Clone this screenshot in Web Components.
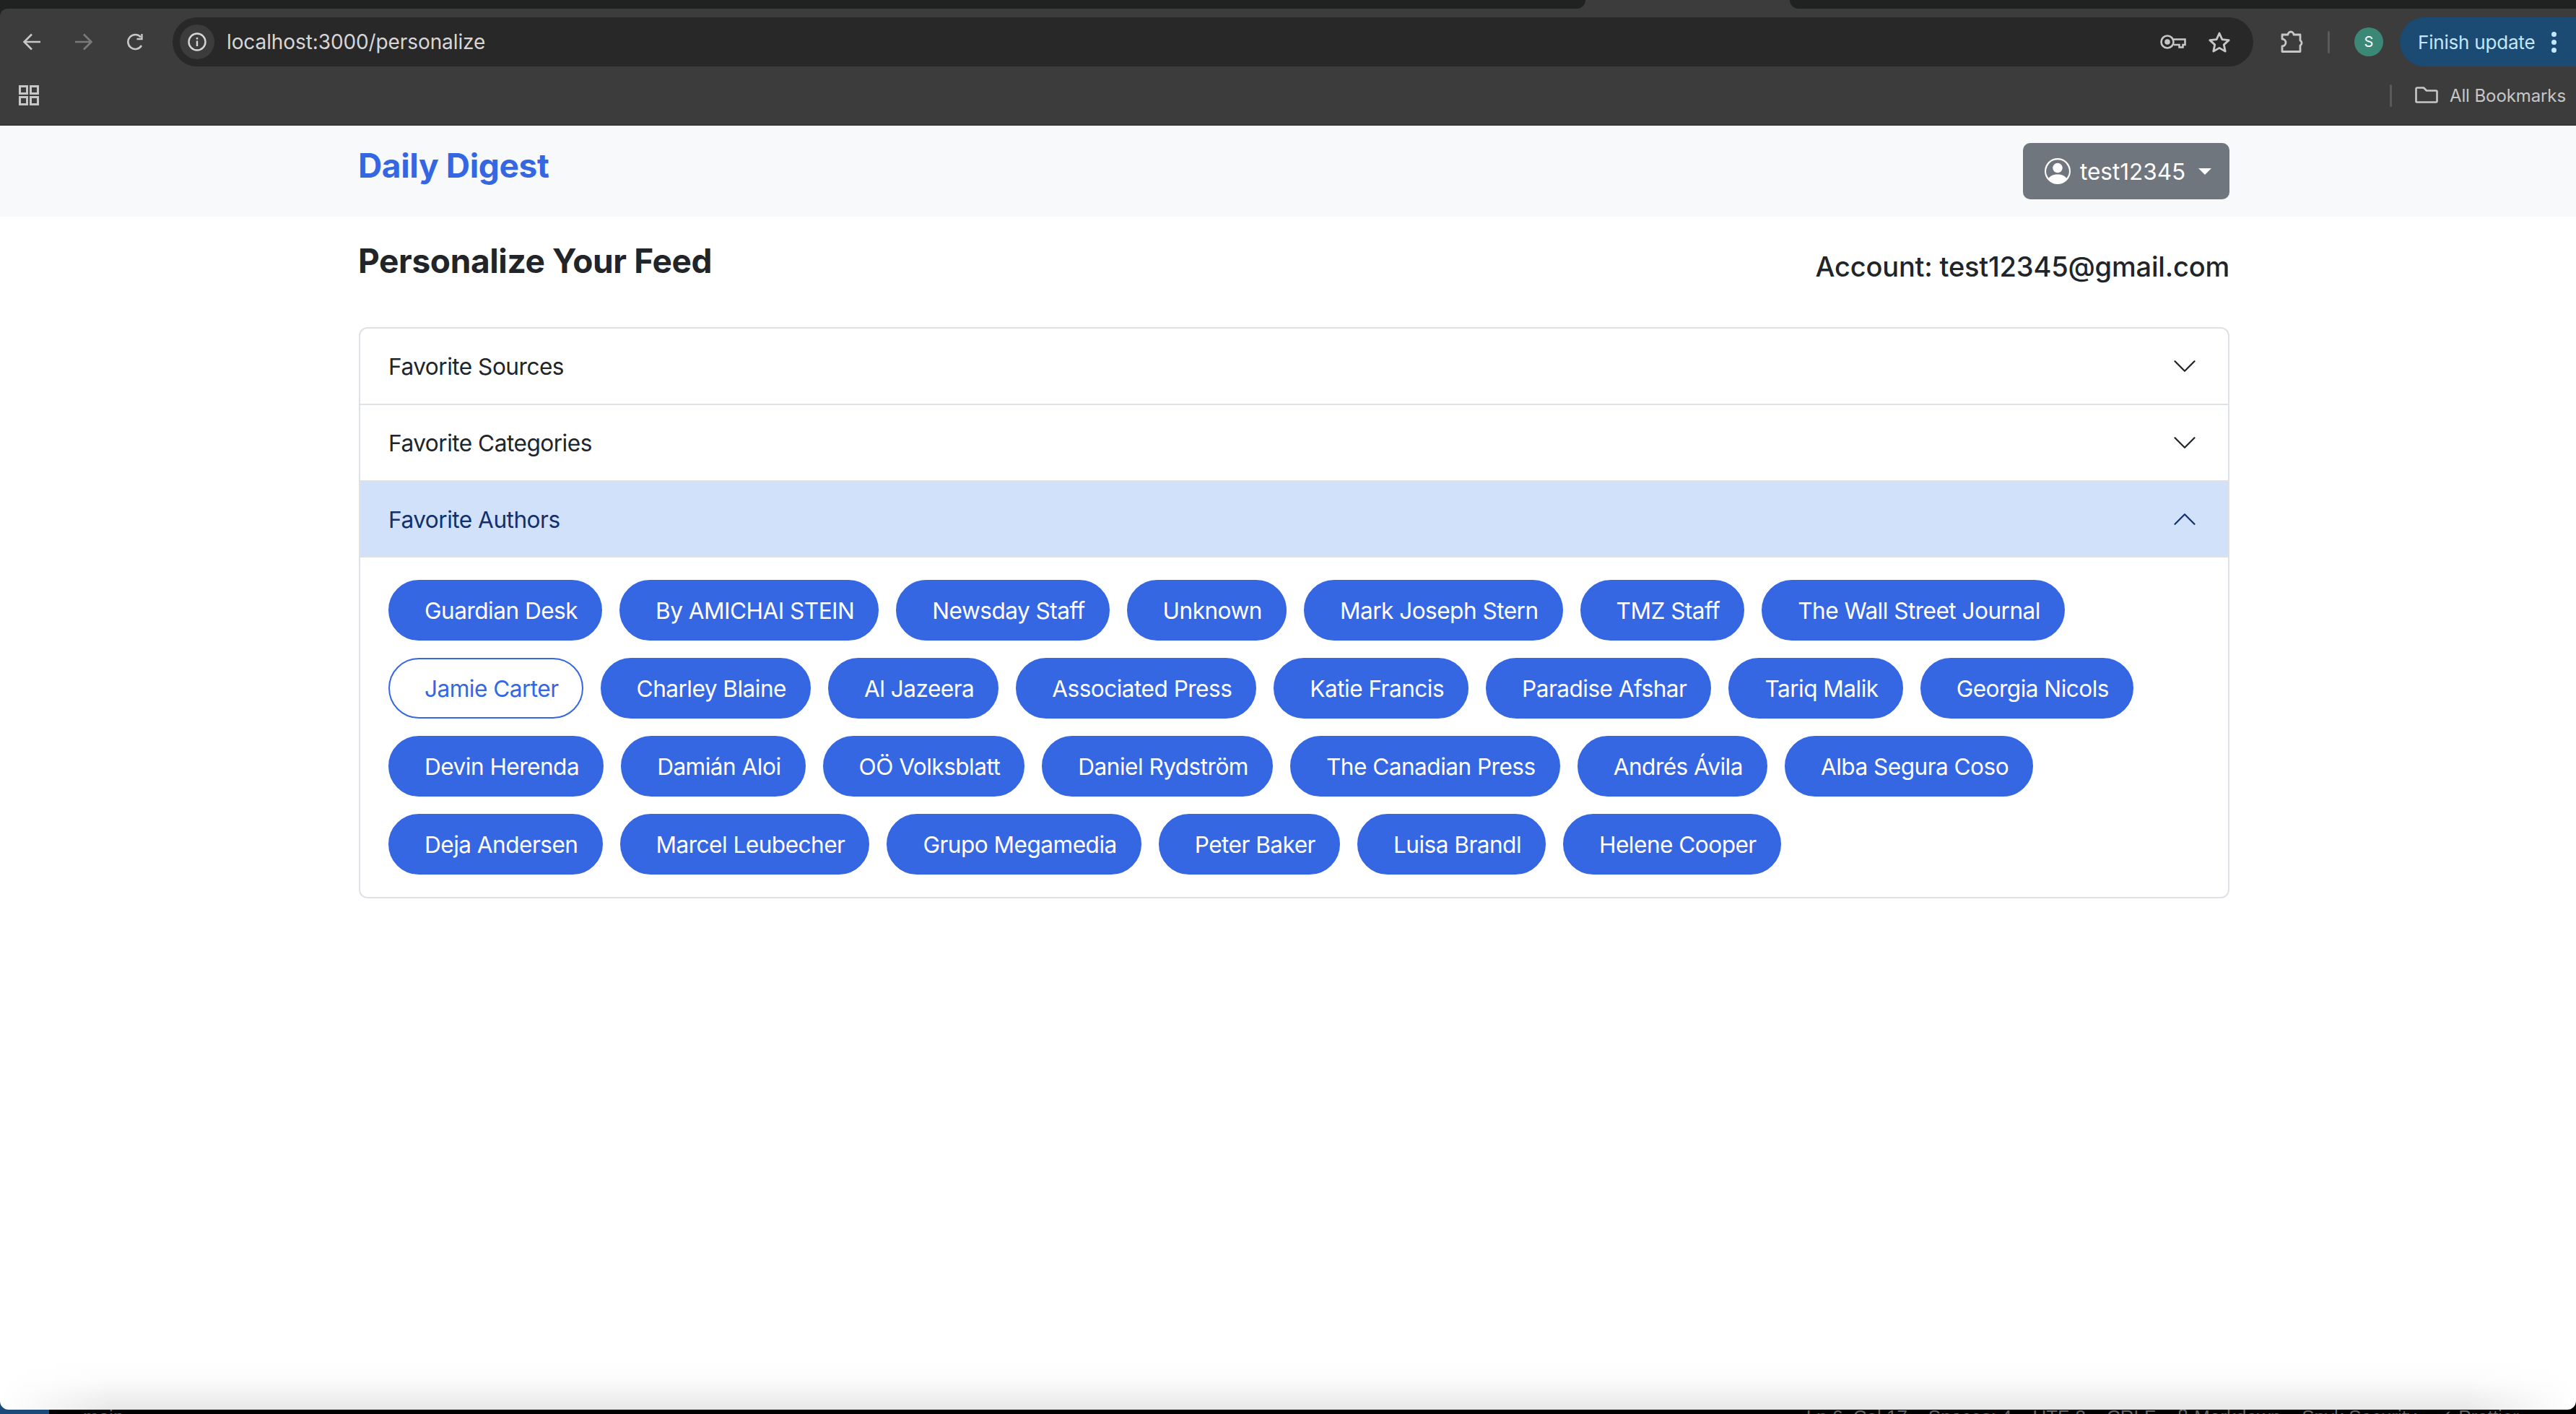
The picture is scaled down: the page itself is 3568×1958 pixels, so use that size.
<!DOCTYPE html>
<html lang="en">
<head>
<meta charset="utf-8">
<title>Daily Digest</title>
<style>
  html, body { margin: 0; height: 100%; background: #000; }
  body { font-family: Inter, "Liberation Sans", sans-serif; }
</style>
</head>
<body>
<browser-frame>
  <digest-nav slot="page" brand="Daily Digest" user="test12345"></digest-nav>
  <feed-settings slot="page" account="test12345@gmail.com"></feed-settings>
</browser-frame>

<script>
const ICONS = {
  chevron: '<path d="M1.646 4.646a.5.5 0 0 1 .708 0L8 10.293l5.646-5.647a.5.5 0 0 1 .708.708l-6 6a.5.5 0 0 1-.708 0l-6-6a.5.5 0 0 1 0-.708z"/>',
  person: '<path d="M11 6a3 3 0 1 1-6 0 3 3 0 0 1 6 0z"/><path fill-rule="evenodd" d="M0 8a8 8 0 1 1 16 0A8 8 0 0 1 0 8zm8-7a7 7 0 0 0-5.468 11.37C3.242 11.226 4.805 10 8 10s4.757 1.225 5.468 2.37A7 7 0 0 0 8 1z"/>',
}

const AUTHORS = [
  'Guardian Desk', 'By AMICHAI STEIN', 'Newsday Staff', 'Unknown', 'Mark Joseph Stern', 'TMZ Staff',
  'The Wall Street Journal', 'Jamie Carter', 'Charley Blaine', 'Al Jazeera', 'Associated Press',
  'Katie Francis', 'Paradise Afshar', 'Tariq Malik', 'Georgia Nicols', 'Devin Herenda', 'Damián Aloi',
  'OÖ Volksblatt', 'Daniel Rydström', 'The Canadian Press', 'Andrés Ávila', 'Alba Segura Coso',
  'Deja Andersen', 'Marcel Leubecher', 'Grupo Megamedia', 'Peter Baker', 'Luisa Brandl', 'Helene Cooper',
]
// the only author in the list that is switched off
const UNSELECTED = new Set(['Jamie Carter'])

class BrowserFrame extends HTMLElement {
  constructor() {
    super()
    this.attachShadow({ mode: 'open' })
    this.shadowRoot.innerHTML = `
      <style>
        :host {
          display: flex; flex-direction: column; height: 1958px; overflow: hidden;
          background: linear-gradient(to right, #1b4a7a 68px, #000 68px) bottom / 100% 30px no-repeat, #202222;
        }
        .titlebar { height: 12px; background: #3c3c3c; flex: none; display: flex; }
        .strip { background: #202222; height: 12px; }
        .strip.a { width: 2196px; border-bottom-right-radius: 12px; }
        .strip.b { margin-left: 283px; flex: 1; border-bottom-left-radius: 12px; }
        .chrome {
          flex: none; height: 162px; box-sizing: border-box; background: #3c3c3c;
          border-top-left-radius: 10px; border-bottom: 2px solid #353535;
          color: #c7c7c7; font-family: Inter, "Liberation Sans", sans-serif;
        }
        .toolbar { display: flex; align-items: center; height: 68px; margin-top: 12px; }
        .nav { flex: none; width: 26px; height: 24px; margin-left: 46px; }
        .nav:first-child { margin-left: 31px; }
        .nav.off { opacity: .45; }
        .omni {
          flex: none; width: 2882px; height: 68px; margin-left: 38px; border-radius: 34px; background: #282828;
          display: flex; align-items: center; box-sizing: border-box; padding-left: 10px;
        }
        .chip { flex: none; width: 48px; height: 48px; border-radius: 50%; background: #3c3c3c; display: flex; align-items: center; justify-content: center; }
        .url { margin-left: 17px; font-size: 28px; color: #d6d6d6; letter-spacing: -.1px; flex: 1; }
        .omni svg.key { margin-right: 30px; }
        .omni svg.star { margin-right: 31px; }
        .sep { flex: none; width: 3px; background: #5a5a5a; border-radius: 2px; }
        .ext { margin-left: 38px; flex: none; }
        .avatar {
          flex: none; width: 40px; height: 40px; margin-left: 34px; border-radius: 50%;
          background: #3c8877; color: #fff; font-size: 20px; display: flex; align-items: center; justify-content: center;
        }
        .update {
          flex: none; width: 260px; height: 68px; margin-left: 23px; border-radius: 34px 0 0 34px; background: #1b4a73; color: #c2e7ff;
          display: flex; align-items: center; box-sizing: border-box; padding-left: 25px; font-size: 26px; letter-spacing: -.2px; white-space: nowrap;
        }
        .dots { display: flex; flex-direction: column; gap: 4px; margin-left: 23px; }
        .dots i { display: block; width: 7px; height: 7px; border-radius: 50%; background: #c2e7ff; }
        .bookmarks { display: flex; align-items: center; height: 56px; margin-top: 12px; padding-left: 26px; }
        .bookmarks .all { margin-left: auto; display: flex; align-items: center; font-size: 24px; letter-spacing: -.1px; padding-right: 14px; }
        .page { flex: 1; background: #fff; display: flex; flex-direction: column; min-height: 0; position: relative; border-radius: 0 0 12px 12px; overflow: hidden; }
        /* window shadow from whatever lies below the browser */
        .page::after {
          content: ''; position: absolute; left: 0; right: 0; bottom: 0; height: 70px; pointer-events: none;
          background: linear-gradient(to bottom, rgba(0,0,0,0), rgba(0,0,0,.012) 40%, rgba(0,0,0,.09));
          -webkit-mask-image: linear-gradient(to right, transparent 0, #000 150px, #000 calc(100% - 150px), transparent 100%);
        }
        .under {
          flex: none; height: 6px; overflow: hidden; color: #666; display: flex;
          font: 26px/26px "Liberation Sans", sans-serif; white-space: pre;
        }
        .under span { display: block; margin-top: -3px; }
        .under .left { margin-left: 115px; }
        .under .right { margin-left: auto; margin-right: 79px; }
      </style>
      <div class="titlebar"><div class="strip a"></div><div class="strip b"></div></div>
      <div class="chrome">
        <div class="toolbar">
          <svg class="nav" viewBox="0 0 26 24" fill="none" stroke="#c7c7c7" stroke-width="2.6"><path d="M25 12H3M13 1.5 2.5 12 13 22.5"/></svg>
          <svg class="nav off" viewBox="0 0 26 24" fill="none" stroke="#c7c7c7" stroke-width="2.6"><path d="M1 12h22M13 1.5 23.5 12 13 22.5"/></svg>
          <svg class="nav" viewBox="0 0 26 24" fill="none" stroke="#c7c7c7" stroke-width="2.6"><path d="M21 17a10 10 0 1 1-1-11.500"/><path d="M21.500 1v7h-7" stroke-width="2.400"/></svg>
          <div class="omni">
            <div class="chip">
              <svg width="26" height="26" viewBox="0 0 26 26" fill="none" stroke="#d6d6d6" stroke-width="2.400"><circle cx="13" cy="13" r="11.500"/><path d="M13 11.500v7.500M13 7v2.500"/></svg>
            </div>
            <div class="url">localhost:3000/personalize</div>
            <svg class="key" width="36" height="20" viewBox="0 0 36 20" fill="none" stroke="#c7c7c7" stroke-width="2.600"><circle cx="10" cy="10" r="8.500"/><circle cx="10" cy="10" r="2.500" fill="#c7c7c7"/><path d="M18.500 6.500H34.500V14h-3v3.500h-5V14h-7.500"/></svg>
            <svg class="star" width="32" height="30" viewBox="0 0 32 30" fill="none" stroke="#c7c7c7" stroke-width="2.800" stroke-linejoin="round"><path d="M16 3l3.900 8.600 9.300 1-6.900 6.300 1.900 9.200L16 23.400l-8.200 4.700 1.900-9.200-6.900-6.300 9.300-1z"/></svg>
          </div>
          <svg class="ext" width="32" height="32" viewBox="0 0 32 32" fill="none" stroke="#c7c7c7" stroke-width="2.800" stroke-linejoin="round"><path d="M2 6h8a4 4 0 0 1 8 0h9v8a4 4 0 0 1 0 7v8.500H2V22a5 5 0 0 0 0-10z"/></svg>
          <div class="sep" style="height:31px;margin-left:33px"></div>
          <div class="avatar">S</div>
          <div class="update">Finish update<div class="dots"><i></i><i></i><i></i></div></div>
        </div>
        <div class="bookmarks">
          <svg width="28" height="28" viewBox="0 0 28 28" fill="none" stroke="#c7c7c7" stroke-width="3"><rect x="1.500" y="1.500" width="10" height="10"/><rect x="16.500" y="1.500" width="10" height="10"/><rect x="1.500" y="16.500" width="10" height="10"/><rect x="16.500" y="16.500" width="10" height="10"/></svg>
          <div class="all">
            <div class="sep" style="height:31px;margin-right:32px"></div>
            <svg width="32" height="24" viewBox="0 0 32 24" fill="none" stroke="#c7c7c7" stroke-width="2.600" stroke-linejoin="round" style="margin-right:16px"><path d="M1.500 3a1.500 1.500 0 0 1 1.500-1.500h9l4 4h13a1.500 1.500 0 0 1 1.500 1.500v13a1.500 1.500 0 0 1-1.500 1.500H3A1.500 1.500 0 0 1 1.500 21z"/></svg>
            All Bookmarks
          </div>
        </div>
      </div>
      <div class="page"><slot name="page"></slot></div>
      <div class="under">
        <span class="left">main</span>
        <span class="right">Ln 6, Col 17    Spaces: 4    UTF-8    CRLF    {} Markdown    Snyk Security    ✓ Prettier</span>
      </div>
    `
  }
}

class DigestNav extends HTMLElement {
  constructor() {
    super()
    this.attachShadow({ mode: 'open' })
  }

  connectedCallback() {
    this.shadowRoot.innerHTML = `
      <style>
        :host { display: block; flex: none; height: 126px; background: #f8f9fa; box-sizing: border-box; padding: 0 480px 0 497px; }
        .row { display: flex; justify-content: space-between; align-items: flex-start; }
        .brand { font-size: 46px; font-weight: 700; line-height: 56px; color: #3567e3; margin: 27px 0 0 -1px; letter-spacing: -.35px; }
        .user {
          margin-top: 24px; width: 286px; height: 78px; box-sizing: border-box; border-radius: 10px; background: #6f767e; color: #fff;
          display: flex; align-items: center; padding-left: 30px; font-size: 31.500px;
        }
        .user svg { fill: #fff; width: 36px; height: 36px; margin-right: 13px; flex: none; }
        .caret { width: 0; height: 0; margin-left: 18px; border: 9px solid transparent; border-bottom: 0; border-top-color: #fff; }
      </style>
      <div class="row">
        <div class="brand">${this.getAttribute('brand')}</div>
        <div class="user"><svg viewBox="0 0 16 16">${ICONS.person}</svg>${this.getAttribute('user')}<span class="caret"></span></div>
      </div>
    `
  }
}

class AuthorPill extends HTMLElement {
  constructor() {
    super()
    this.attachShadow({ mode: 'open' })
    this.shadowRoot.innerHTML = `
      <style>
        :host {
          display: inline-flex; align-items: center; box-sizing: border-box; height: 84px; border-radius: 42px;
          padding: 0 32px 0 48px; background: #3567e3; color: #fff; border: 2px solid #3567e3;
          font-size: 31.600px; letter-spacing: -.53px; white-space: nowrap;
        }
        :host([off]) { background: #fff; color: #3567e3; }
      </style>
      <slot></slot>
    `
  }
}

class AccordionRow extends HTMLElement {
  constructor() {
    super()
    this.attachShadow({ mode: 'open' })
    this.shadowRoot.innerHTML = `
      <style>
        :host { display: block; border-top: 2px solid #dee2e6; }
        :host(:first-child) { border-top: 0; }
        .head {
          height: 104px; display: flex; align-items: center; justify-content: space-between; box-sizing: border-box;
          padding: 0 42px 0 39px; color: #212529; font-size: 31.600px; letter-spacing: -.5px;
        }
        :host([open]) .head { background: #d2e1fa; color: #12306b; border-bottom: 2px solid #dee2e6; height: 105px; padding-top: 1px; }
        svg { width: 36px; height: 36px; fill: currentColor; }
        :host([open]) svg { transform: rotate(180deg); }
        .body { display: none; }
        :host([open]) .body { display: block; }
      </style>
      <div class="head"><span>${this.getAttribute('label')}</span><svg viewBox="0 0 16 16">${ICONS.chevron}</svg></div>
      <div class="body"><slot></slot></div>
    `
  }
}

class FeedSettings extends HTMLElement {
  constructor() {
    super()
    this.attachShadow({ mode: 'open' })
  }

  connectedCallback() {
    this.shadowRoot.innerHTML = `
      <style>
        :host { display: block; padding: 0 480px 0 497px; }
        .top { display: flex; justify-content: space-between; align-items: flex-start; height: 153px; }
        h1 { margin: 33px 0 0 -1px; font-size: 46px; line-height: 56px; font-weight: 700; color: #212529; letter-spacing: -.38px; }
        .account { margin-top: 41px; font-size: 38px; line-height: 56px; font-weight: 450; color: #212529; letter-spacing: -.2px; }
        .card { border: 2px solid #dee2e6; border-radius: 12px; overflow: hidden; }
        .pills { display: flex; flex-wrap: wrap; gap: 24px; padding: 31px 39px; }
      </style>
      <div class="top">
        <h1>Personalize Your Feed</h1>
        <div class="account">Account: ${this.getAttribute('account')}</div>
      </div>
      <div class="card">
        <accordion-row label="Favorite Sources"></accordion-row>
        <accordion-row label="Favorite Categories"></accordion-row>
        <accordion-row label="Favorite Authors" open>
          <div class="pills"></div>
        </accordion-row>
      </div>
    `
    const list = this.shadowRoot.querySelector('.pills')
    for (const name of AUTHORS) {
      const pill = document.createElement('author-pill')
      pill.textContent = name
      if (UNSELECTED.has(name)) pill.setAttribute('off', '')
      list.append(pill)
    }
  }
}

customElements.define('browser-frame', BrowserFrame)
customElements.define('digest-nav', DigestNav)
customElements.define('author-pill', AuthorPill)
customElements.define('accordion-row', AccordionRow)
customElements.define('feed-settings', FeedSettings)
</script>
</body>
</html>
